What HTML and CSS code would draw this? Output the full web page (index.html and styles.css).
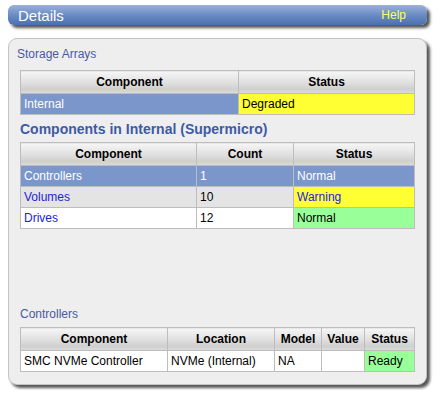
FILE: index.html
```html
<!DOCTYPE html>
<html lang="en">

<head>
    <meta charset="utf-8">
    <title>Details</title>
    <link rel="stylesheet" href="styles.css">
</head>

<body>
    <header class="titlebar">
        <h1>Details</h1>
        <a class="help" href="#">Help</a>
    </header>

    <main class="panel">
        <p class="caption first">Storage Arrays</p>
        <table class="grid">
            <colgroup><col class="a-comp"><col class="a-status"></colgroup>
            <tr><th>Component</th><th>Status</th></tr>
            <tr class="sel"><td>Internal</td><td class="yellow">Degraded</td></tr>
        </table>

        <h2 class="subhead">Components in Internal (Supermicro)</h2>
        <table class="grid">
            <colgroup><col class="c-comp"><col class="c-count"><col class="c-status"></colgroup>
            <tr><th>Component</th><th>Count</th><th>Status</th></tr>
            <tr class="sel"><td>Controllers</td><td>1</td><td>Normal</td></tr>
            <tr class="alt"><td><a href="#">Volumes</a></td><td>10</td><td class="yellow"><a href="#">Warning</a></td></tr>
            <tr><td><a href="#">Drives</a></td><td>12</td><td class="green">Normal</td></tr>
        </table>

        <p class="caption lower">Controllers</p>
        <table class="grid last">
            <colgroup><col class="k-comp"><col class="k-loc"><col class="k-model"><col class="k-val"><col class="k-status"></colgroup>
            <tr><th>Component</th><th>Location</th><th>Model</th><th>Value</th><th>Status</th></tr>
            <tr><td>SMC NVMe Controller</td><td>NVMe (Internal)</td><td>NA</td><td></td><td class="green">Ready</td></tr>
        </table>
    </main>
</body>

</html>
```

FILE: styles.css
```css
body {
    margin: 0;
    padding: 5px 8px;
    font-family: "Liberation Sans", Arial, sans-serif;
    font-size: 12px;
    color: #000;
    background-color: #fff;
}

/* title bar */
.titlebar {
    display: flex;
    justify-content: space-between;
    align-items: center;
    height: 20px;
    width: 419px;
    box-sizing: border-box;
    padding: 0 21px 0 10px;
    border-radius: 6px;
    background: linear-gradient(#9db2d9, #6a8cc4 50%, #4b70b0);
    box-shadow: 3px 3px 3px #555;
}

.titlebar h1 {
    margin: 0;
    font-size: 15px;
    font-weight: normal;
    color: #fff;
}

.help {
    color: #ffff55;
    text-decoration: none;
    font-size: 12px;
}

/* panel */
.panel {
    margin-top: 13px;
    width: 419px;
    height: 347px;
    box-sizing: border-box;
    padding: 0 12px 0 11px;
    background-color: #eeeeee;
    border: 1px solid #c4c4c4;
    border-radius: 9px;
    box-shadow: 3px 3px 3px #555;
}

.caption {
    margin: 0;
    color: #4b5a9e;
    font-size: 12px;
    line-height: 15px;
}

.caption.first {
    margin: 8px 0 8px -3px;
}

.caption.lower {
    margin: 78px 0 5px 0;
}

.subhead {
    margin: 6px 0 4px 0;
    font-size: 14px;
    line-height: 17px;
    color: #3d5aa6;
}

/* tables */
.grid {
    width: 394px;
    border-collapse: collapse;
    table-layout: fixed;
    background-color: #fff;
}

.grid th,
.grid td {
    border: 1px solid #bdbdbd;
    padding: 0 3px;
    text-align: left;
    white-space: nowrap;
}

.grid th {
    height: 22px;
    text-align: center;
    font-weight: bold;
    background: linear-gradient(#f6f6f6, #dedede 55%, #cfcfcf 80%, #dcdcdc);
}

.grid td {
    height: 20px;
}

.grid a {
    color: #2222dd;
    text-decoration: none;
}

.sel td {
    background-color: #7a96cb;
    color: #fff;
}

.alt td {
    background-color: #e4e4e4;
}

.grid td.yellow {
    background-color: #ffff33;
    color: #000;
}

.grid td.green {
    background-color: #99ff99;
    color: #000;
}

.a-comp { width: 218px; }
.a-status { width: 176px; }

.c-comp { width: 176px; }
.c-count { width: 97px; }
.c-status { width: 121px; }

.k-comp { width: 147px; }
.k-loc { width: 107px; }
.k-model { width: 47px; }
.k-val { width: 43px; }
.k-status { width: 50px; }
```
